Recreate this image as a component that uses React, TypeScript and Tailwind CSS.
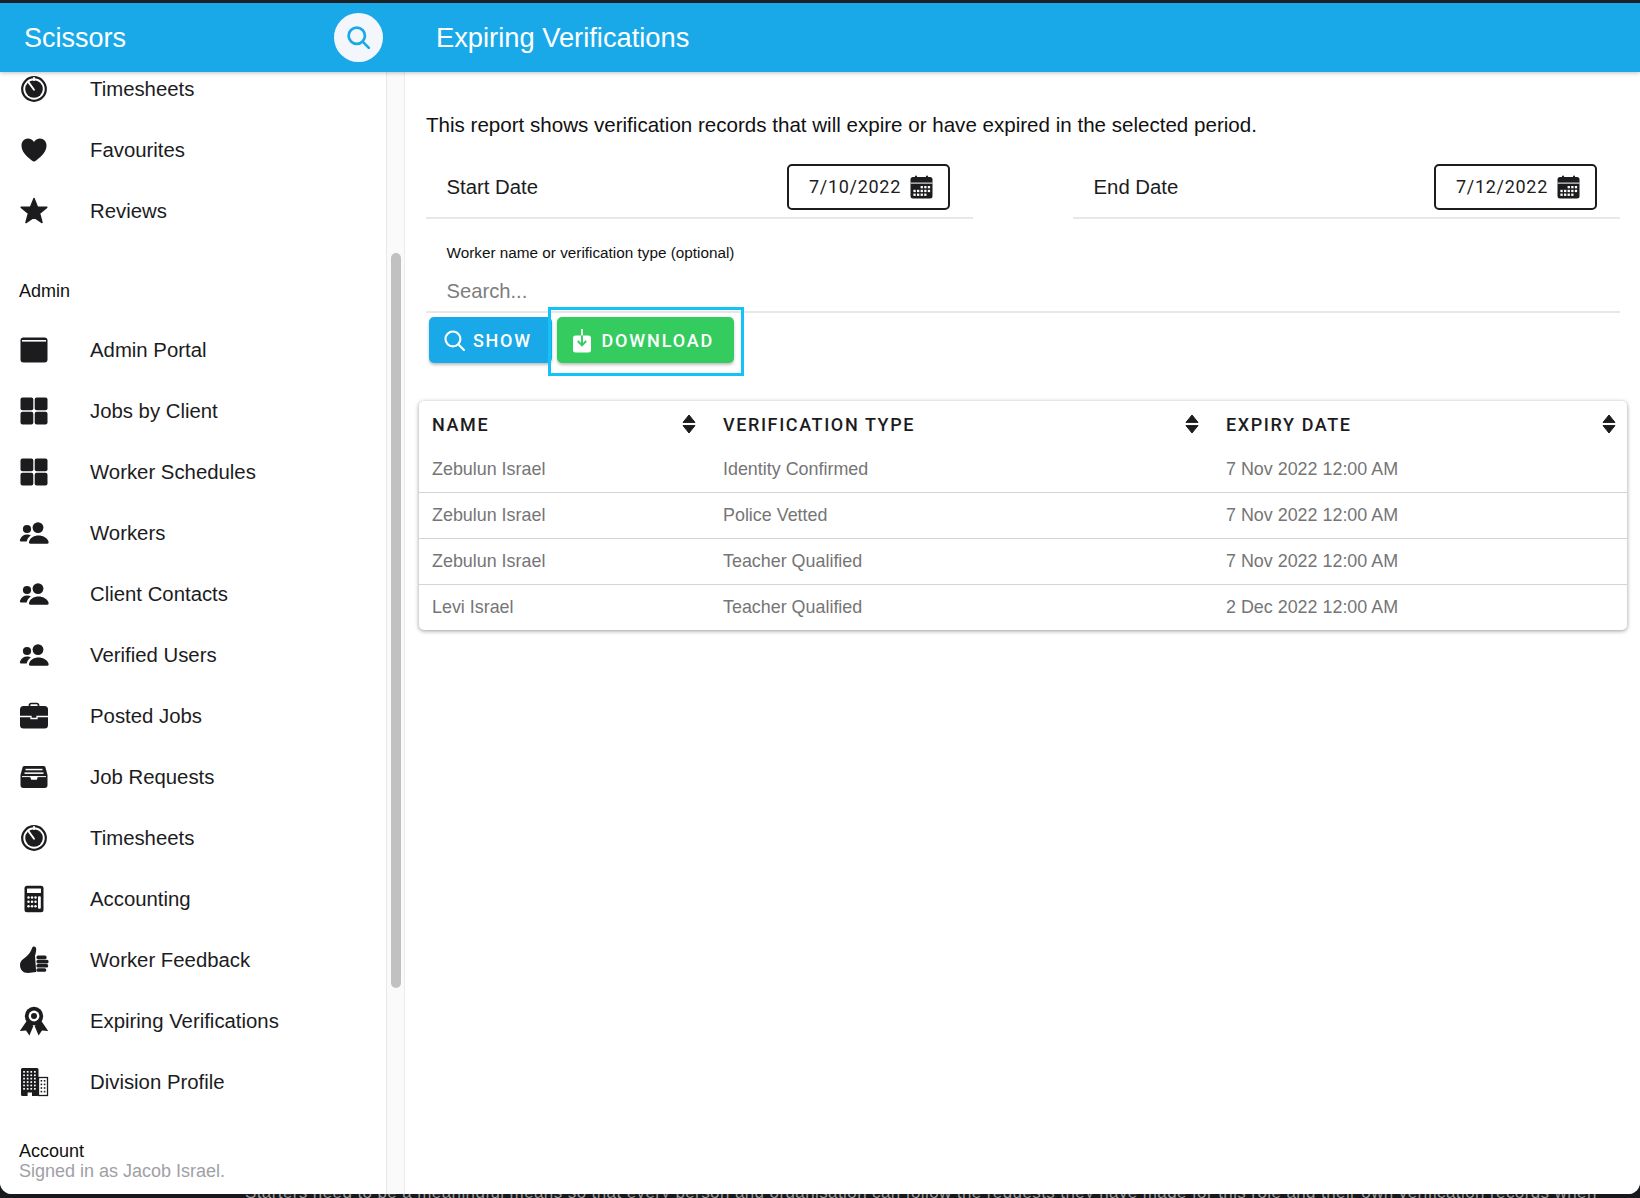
import React from "react";

const D = "#1c1c1e";

function Box({ children }: { children: React.ReactNode }) {
  return (
    <svg width="30" height="30" viewBox="0 0 30 30" fill={D} className="block">
      {children}
    </svg>
  );
}

const Timer = () => (
  <Box>
    <circle cx="15" cy="15" r="11.8" fill="none" stroke={D} strokeWidth="2.2" />
    <circle cx="15" cy="15" r="8.8" />
    <path d="M15 15.8 L9.8 8.6" stroke="#fff" strokeWidth="1.9" strokeLinecap="round" />
    <path d="M15 3 V7" stroke="#fff" strokeWidth="1.6" />
  </Box>
);
const Heart = () => (
  <Box>
    <path d="M15 26.5C14.5 26.5 13.5 26 12.5 25.2C7 21 2.5 16.5 2.5 10.5C2.5 6.5 5.3 3.5 9 3.5C11.5 3.5 13.7 4.8 15 7C16.3 4.8 18.5 3.5 21 3.5C24.7 3.5 27.5 6.5 27.5 10.5C27.5 16.5 23 21 17.5 25.2C16.5 26 15.5 26.5 15 26.5Z" />
  </Box>
);
const Star = () => (
  <Box>
    <path
      d="M15 2.5L18.4 11L27.8 11.3L20.5 17.3L23 26.5L15 21.2L7 26.5L9.5 17.3L2.2 11.3L11.6 11Z"
      stroke={D}
      strokeWidth="1.5"
      strokeLinejoin="round"
    />
  </Box>
);
const Win = () => (
  <Box>
    <rect x="1.5" y="2.5" width="27" height="25" rx="3" />
    <rect x="3" y="5" width="24" height="1.6" fill="#fff" />
  </Box>
);
const Grid = () => (
  <Box>
    <rect x="1.5" y="1.5" width="12.8" height="12.8" rx="2" />
    <rect x="15.7" y="1.5" width="12.8" height="12.8" rx="2" />
    <rect x="1.5" y="15.7" width="12.8" height="12.8" rx="2" />
    <rect x="15.7" y="15.7" width="12.8" height="12.8" rx="2" />
  </Box>
);
const People = () => (
  <Box>
    <circle cx="8" cy="11" r="4.1" />
    <circle cx="19" cy="9.6" r="5.4" />
    <path d="M11.5 25.8C9.8 25.8 9.6 24.4 10.4 22.8C11.8 19.8 15 17.6 19.5 17.6C24 17.6 27.6 19.8 29.2 22.8C30 24.4 29.8 25.8 28.2 25.8Z" />
    <path d="M2 23.5C0.8 23.5 0.6 22.4 1.2 21.2C2.4 18.4 4.8 16.4 8 16.4C9.6 16.4 10.8 16.8 11.8 17.4C9.6 19 8 21.4 7.7 23.5Z" />
  </Box>
);
const Case = () => (
  <Box>
    <path d="M10.5 6V4.2A1.7 1.7 0 0 1 12.2 2.5H17.8A1.7 1.7 0 0 1 19.5 4.2V6" fill="none" stroke={D} strokeWidth="1.7" />
    <rect x="1" y="5" width="28" height="22.5" rx="3.5" />
    <path d="M1 15.5H12V17.5H18V15.5H29" fill="none" stroke="#fff" strokeWidth="1.3" />
  </Box>
);
const Tray = () => (
  <Box>
    <path d="M5.5 4H24.5C25.5 4 26.2 4.5 26.5 5.5L28.5 13V23C28.5 25 27.5 26 25.5 26H4.5C2.5 26 1.5 25 1.5 23V13L3.5 5.5C3.8 4.5 4.5 4 5.5 4Z" />
    <rect x="6.5" y="6.8" width="17" height="1.5" fill="#fff" />
    <rect x="5.5" y="10.4" width="19" height="1.5" fill="#fff" />
    <path d="M11 14.2H19L17.8 17.8H12.2Z" fill="#fff" />
    <path d="M3 14.6H27" stroke="#fff" strokeWidth="1" />
  </Box>
);
const Calc = () => (
  <Box>
    <rect x="5.5" y="1.8" width="19" height="26.4" rx="2.5" />
    <rect x="8" y="4.6" width="14" height="4.4" rx="0.5" fill="#fff" />
    {[13, 17.4, 21.8].map((y) =>
      [9.5, 13, 16.5].map((x) => <circle key={`${x}-${y}`} cx={x} cy={y + 0.4} r="1.25" fill="#fff" />)
    )}
    <rect x="19" y="12.2" width="2.8" height="12.6" rx="1" fill="#fff" />
  </Box>
);
const Thumb = () => (
  <Box>
    <path d="M1 19.5C1 16.5 3.5 14.2 6.2 12.5C9.4 10.4 12 6.5 13.2 2.8C13.7 1.3 15.4 1.2 16.4 2C17.6 3 17.4 5.6 16.4 9.5L16 11L17.2 27L9 28C4 28 1 25 1 19.5Z" />
    <rect x="17.4" y="10.6" width="10.2" height="3.6" rx="1.6" />
    <rect x="17.4" y="14.8" width="12.2" height="3.6" rx="1.6" />
    <rect x="17.4" y="19" width="11.8" height="3.6" rx="1.6" />
    <rect x="17.4" y="23.2" width="9.8" height="3.6" rx="1.6" />
  </Box>
);
const Rosette = () => (
  <Box>
    <path d="M8 14.5L0.8 25L7 24.4L10.4 29.6L14.4 20Z" />
    <path d="M22 14.5L29.2 25L23 24.4L19.6 29.6L15.6 20Z" />
    <circle cx="15" cy="10" r="9.2" />
    <circle cx="15" cy="10" r="5.4" fill="#fff" />
    <circle cx="15" cy="10" r="3" />
  </Box>
);
const Building = () => (
  <Box>
    <rect x="2" y="1" width="17.5" height="28" rx="1.5" />
    {[4, 7.4, 10.8, 14.2, 17.6, 21].map((y) =>
      [5, 8.6, 12.2, 15.8].map((x) => <rect key={`${x}-${y}`} x={x - 0.8} y={y} width="1.7" height="1.7" fill="#fff" />)
    )}
    <rect x="8.6" y="25.5" width="4.4" height="3.5" fill="#fff" />
    <rect x="19.5" y="10.5" width="9" height="18" fill="#fff" stroke={D} strokeWidth="1.3" />
    {[13, 16.6, 20.2, 23.8].map((y) =>
      [22.4, 25.6].map((x) => <rect key={`${x}-${y}`} x={x - 0.8} y={y} width="1.6" height="1.6" />)
    )}
  </Box>
);

const Calendar = () => (
  <svg width="23" height="24" viewBox="0 0 23 24" fill={D} className="block shrink-0">
    <rect x="5" y="0.5" width="2" height="4" rx="1" />
    <rect x="16" y="0.5" width="2" height="4" rx="1" />
    <rect x="0.5" y="2" width="22" height="21.5" rx="2.5" />
    <rect x="0.5" y="7.6" width="22" height="1" fill="#fff" />
    {[11, 14.8, 18.6].map((y, r) =>
      [3.4, 7, 10.6, 14.2, 17.8].map((x, c) =>
        (r === 0 && c < 2) || (r === 2 && c > 3) ? null : <rect key={`${x}-${y}`} x={x} y={y} width="2.3" height="2.3" fill="#fff" />
      )
    )}
  </svg>
);

const SearchIcon = ({ color, size, sw }: { color: string; size: number; sw: number }) => (
  <svg width={size} height={size} viewBox="0 0 24 24" fill="none" stroke={color} strokeWidth={sw} strokeLinecap="round" className="block shrink-0">
    <circle cx="10.2" cy="10.2" r="8.5" />
    <path d="M16.6 16.6L22.8 22.8" />
  </svg>
);

const SortIcon = () => (
  <svg width="14" height="20" viewBox="0 0 14 20" fill={D} className="block shrink-0">
    <path d="M7 1L13 8.4H1Z" stroke={D} strokeWidth="1" strokeLinejoin="round" />
    <path d="M7 19L13 11.6H1Z" stroke={D} strokeWidth="1" strokeLinejoin="round" />
  </svg>
);

const DownloadIcon = () => (
  <svg width="20" height="28" viewBox="0 0 20 28" className="block shrink-0">
    <rect x="1" y="9.5" width="18" height="17" rx="2.5" fill="#fff" />
    <path d="M10 3V9.5" stroke="#fff" strokeWidth="1.8" />
    <path d="M10 9.5V19M5.8 15L10 19.4L14.2 15" stroke="#34cc5f" strokeWidth="1.9" fill="none" />
  </svg>
);

function NavRow({ icon, label }: { icon: React.ReactNode; label: string }) {
  return (
    <div className="flex h-[61px] shrink-0 items-center">
      <div className="w-[90px] pl-[19px]">{icon}</div>
      <span className="mt-[1.5px] text-[20.35px] text-[#1c1c1e]">{label}</span>
    </div>
  );
}

function DateField({ label, value }: { label: string; value: string }) {
  return (
    <div className="flex h-[58px] w-[547px] items-center border-b-2 border-[#e8e8e8] pb-[4px] pl-[20.5px] pr-[23px]">
      <span className="mt-[1.5px] text-[20.35px] text-[#1c1c1e]">{label}</span>
      <div className="ml-auto flex h-[46px] w-[163px] items-center rounded-[5px] border-[2.5px] border-[#1c1c1e] pl-[20px]">
        <span className="w-[100.5px] font-['Roboto'] text-[18px] tracking-[0.7px] text-[#1c1c1e]">{value}</span>
        <Calendar />
      </div>
    </div>
  );
}

const rows = [
  ["Zebulun Israel", "Identity Confirmed", "7 Nov 2022 12:00 AM"],
  ["Zebulun Israel", "Police Vetted", "7 Nov 2022 12:00 AM"],
  ["Zebulun Israel", "Teacher Qualified", "7 Nov 2022 12:00 AM"],
  ["Levi Israel", "Teacher Qualified", "2 Dec 2022 12:00 AM"],
];

function Th({ label, wide }: { label: string; wide?: boolean }) {
  return (
    <div className={`flex h-[46px] items-center pl-[14px] first:pl-[13px] ${wide ? "pr-[11px]" : "pr-[13px]"}`}>
      <span className="font-['Roboto'] text-[18px] font-medium tracking-[1.6px] text-[#1c1c1e]">{label}</span>
      <span className="ml-auto">
        <SortIcon />
      </span>
    </div>
  );
}

export default function App() {
  return (
    <div className="relative flex h-[1198px] w-[1640px] flex-col overflow-hidden bg-[#16181b] font-['Liberation_Sans',sans-serif]">
      <div className="h-[3px] shrink-0 bg-[#1c2127]" />
      <header className="relative z-10 flex h-[69px] shrink-0 items-center bg-[#1aa9e8] shadow-[0_1px_4px_rgba(0,0,0,0.25)]">
        <div className="flex w-[405px] items-center pl-[24px]">
          <span className="mt-[1px] w-[110px] text-[27px] text-white">Scissors</span>
          <div className="ml-[200px] flex h-[49px] w-[49px] items-center justify-center rounded-full bg-[#f3f6fa]">
            <SearchIcon color="#1aa9e8" size={23} sw={2.8} />
          </div>
        </div>
        <h1 className="mt-[1px] pl-[31px] text-[27.3px] font-normal text-white">Expiring Verifications</h1>
      </header>

      <div className="flex min-h-0 flex-1 overflow-hidden rounded-b-[12px] bg-white">
        <aside className="flex w-[387px] shrink-0 flex-col overflow-hidden border-r border-[#e8e8e8] bg-white">
          <div className="-mt-[14px] flex flex-col">
            <NavRow icon={<Timer />} label="Timesheets" />
            <NavRow icon={<Heart />} label="Favourites" />
            <NavRow icon={<Star />} label="Reviews" />
            <div className="mb-[13.5px] mt-[35px] flex h-[30px] items-center pl-[19px] text-[18px] text-[#111]">Admin</div>
            <NavRow icon={<Win />} label="Admin Portal" />
            <NavRow icon={<Grid />} label="Jobs by Client" />
            <NavRow icon={<Grid />} label="Worker Schedules" />
            <NavRow icon={<People />} label="Workers" />
            <NavRow icon={<People />} label="Client Contacts" />
            <NavRow icon={<People />} label="Verified Users" />
            <NavRow icon={<Case />} label="Posted Jobs" />
            <NavRow icon={<Tray />} label="Job Requests" />
            <NavRow icon={<Timer />} label="Timesheets" />
            <NavRow icon={<Calc />} label="Accounting" />
            <NavRow icon={<Thumb />} label="Worker Feedback" />
            <NavRow icon={<Rosette />} label="Expiring Verifications" />
            <NavRow icon={<Building />} label="Division Profile" />
            <div className="mt-[28px] pl-[19px] text-[18px] leading-[20px] text-[#111]">Account</div>
            <div className="pl-[19px] text-[18px] leading-[21px] text-[#a0a0a6]">Signed in as Jacob Israel.</div>
          </div>
        </aside>

        <div className="w-[18px] shrink-0 border-r border-[#ececec] bg-[#fafafa] pl-[4px] pt-[181px]">
          <div className="h-[735px] w-[10px] rounded-full bg-[#c1c1c1]" />
        </div>

        <main className="min-w-0 flex-1 bg-white pl-[14px] pr-[13px] pt-[38px]">
          <div className="mx-[7px]">
            <p className="text-[20.57px] leading-[30px] text-[#111]">
              This report shows verification records that will expire or have expired in the selected period.
            </p>
            <div className="mt-[20.5px] flex justify-between">
              <DateField label="Start Date" value="7/10/2022" />
              <DateField label="End Date" value="7/12/2022" />
            </div>
            <div className="border-b-2 border-[#e8e8e8] pl-[20.5px]">
              <div className="pt-[24.5px] text-[15.3px] leading-[20px] text-[#111]">Worker name or verification type (optional)</div>
              <div className="mt-[13px] h-[35px] text-[20.2px] leading-[30px] text-[#7d7d7d]">Search...</div>
            </div>
            <div className="mt-[4px] flex gap-[5px] pl-[3px]">
              <button className="flex h-[46px] w-[123px] items-center rounded-[5px] bg-[#1aa9e8] pl-[15px] shadow-[0_2px_3px_rgba(0,0,0,0.25)]">
                <SearchIcon color="#fff" size={21} sw={2.4} />
                <span className="ml-[8px] font-['Roboto'] text-[18px] font-medium tracking-[1.7px] text-white">SHOW</span>
              </button>
              <div className="relative">
                <button className="flex h-[46px] w-[177px] items-center rounded-[5px] bg-[#34cc5f] pl-[15px] shadow-[0_2px_3px_rgba(0,0,0,0.25)]">
                  <DownloadIcon />
                  <span className="ml-[9.5px] font-['Roboto'] text-[18px] font-medium tracking-[1.85px] text-white">DOWNLOAD</span>
                </button>
                <div className="pointer-events-none absolute -bottom-[13px] -left-[9px] -right-[10px] -top-[10px] border-[3px] border-[#12c3f7]" />
              </div>
            </div>
          </div>
          <div className="mt-[38px] overflow-hidden rounded-[5px] bg-white shadow-[0_1px_4px_rgba(0,0,0,0.4)]">
            <div className="grid grid-cols-[290px_503px_1fr]">
              <Th label="NAME" />
              <Th label="VERIFICATION TYPE" />
              <Th label="EXPIRY DATE" wide />
            </div>
            {rows.map((r, i) => (
              <div
                key={i}
                className={`grid grid-cols-[290px_503px_1fr] items-center text-[17.9px] text-[#757575] ${i < 3 ? "h-[46px] border-b border-[#d4d4d4]" : "h-[44.5px]"}`}
              >
                {r.map((c, j) => (
                  <div key={j} className="pl-[14px] first:pl-[13px]">
                    {c}
                  </div>
                ))}
              </div>
            ))}
          </div>
        </main>
      </div>

      <div className="h-[4px] shrink-0 overflow-hidden pl-[245px]">
        <div className="-mt-[11px] whitespace-nowrap text-[17px] leading-[20px] tracking-[0.4px] text-[#9a9a9a]">
          Starters need to be a meaningful means so that every person and organisation can follow the requests they have made for this role and their own verification records when
        </div>
      </div>
    </div>
  );
}
